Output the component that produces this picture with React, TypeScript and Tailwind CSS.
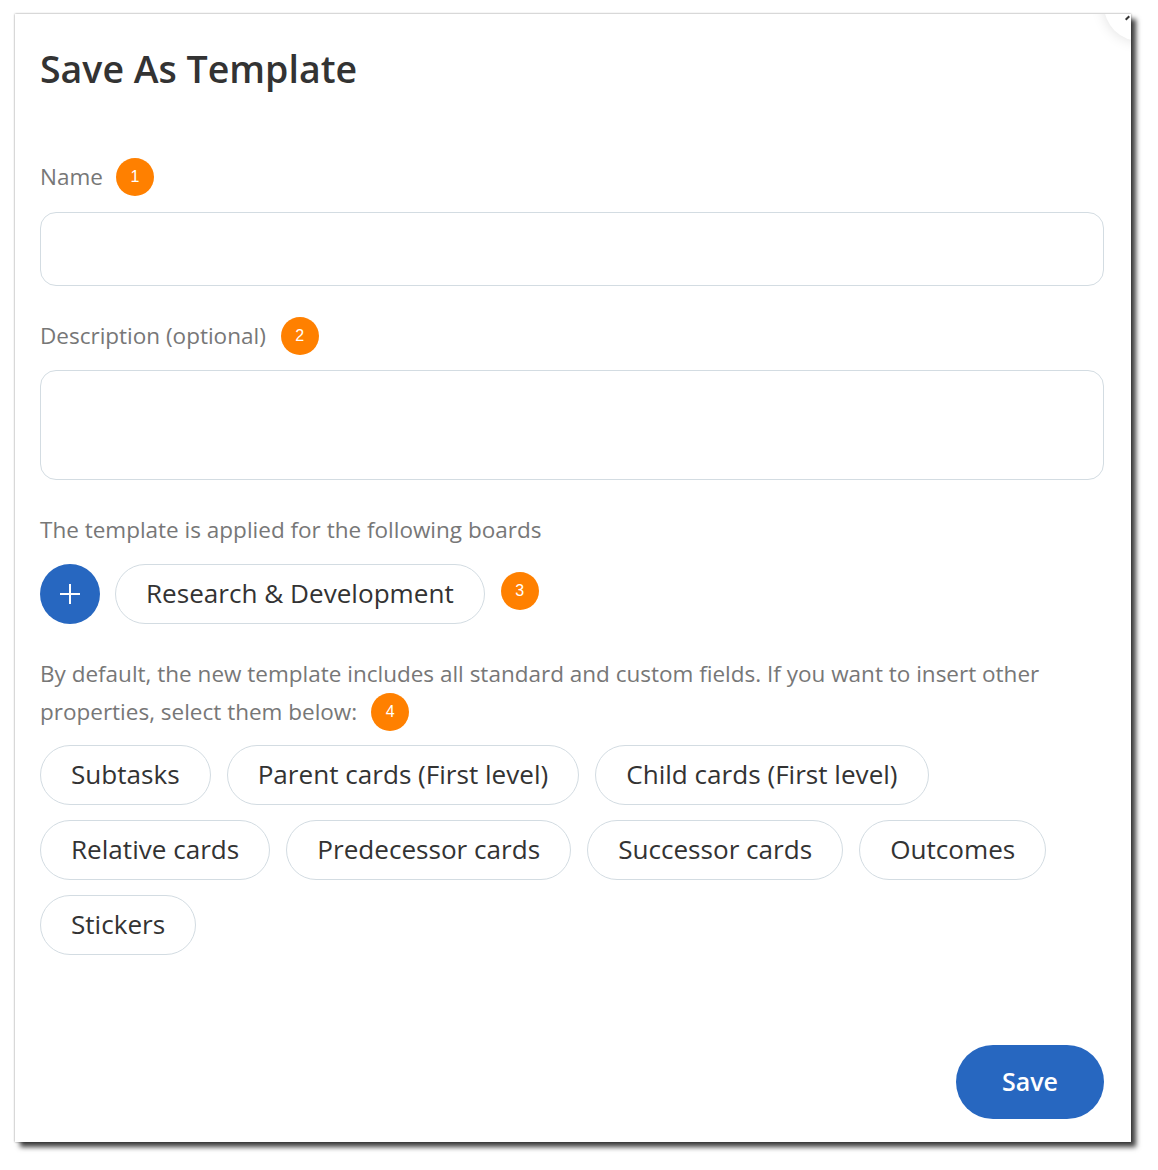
import React from 'react';

const Badge = ({ n }: { n: number }) => (
    <span className="inline-flex items-center justify-center w-[38px] h-[38px] rounded-full bg-[#ff8000] text-white text-[16px] leading-none shrink-0 [font-family:'Liberation_Sans',Arial,sans-serif]">
        {n}
    </span>
);

const Chip = ({ label }: { label: string }) => (
    <div className="h-[60px] px-[30px] flex items-center rounded-full border border-[#d3dce2] bg-white text-[26.1px] text-[#333]">
        {label}
    </div>
);

const properties = [
    'Subtasks',
    'Parent cards (First level)',
    'Child cards (First level)',
    'Relative cards',
    'Predecessor cards',
    'Successor cards',
    'Outcomes',
    'Stickers',
];

const App = () => {
    return (
        <div className="w-[1158px] h-[1170px] bg-white pl-[15px] pt-[14px] [font-family:'Open_Sans',sans-serif]">
            <div className="relative w-[1116px] h-[1128px] bg-white overflow-hidden shadow-[5px_5px_5px_rgba(0,0,0,0.75),0_0_2px_rgba(0,0,0,0.45)] pl-[25px] pr-[27px] pt-[31px]">
                {/* close button, cut off at the corner */}
                <div className="absolute right-[-45px] top-[-45px] w-[72px] h-[72px] rounded-full bg-white shadow-[0_0_14px_rgba(0,0,0,0.13)]" />
                <div className="absolute right-[1px] top-[3px] w-[5px] h-[2px] bg-[#333] -rotate-45" />

                <h1 className="text-[37.5px] leading-[48px] font-semibold text-[#333]">Save As Template</h1>

                <div className="mt-[65px] flex items-center gap-[13px]">
                    <span className="text-[22.5px] leading-[30px] text-[#777]">Name</span>
                    <Badge n={1} />
                </div>
                <div className="mt-[16px] h-[74px] rounded-[16px] border border-[#d3dce2]" />

                <div className="mt-[31px] flex items-center gap-[15px]">
                    <span className="text-[22.5px] leading-[30px] text-[#777]">Description (optional)</span>
                    <Badge n={2} />
                </div>
                <div className="mt-[15px] h-[110px] rounded-[16px] border border-[#d3dce2]" />

                <p className="mt-[35px] text-[22.5px] leading-[30px] text-[#777]">The template is applied for the following boards</p>
                <div className="mt-[19px] flex items-center gap-[15px]">
                    <button className="w-[60px] h-[60px] rounded-full bg-[#2767c0] flex items-center justify-center">
                        <svg width="22" height="22" viewBox="0 0 22 22">
                            <path d="M11 1v20M1 11h20" stroke="#fff" strokeWidth="2" />
                        </svg>
                    </button>
                    <Chip label="Research & Development" />
                    <span className="ml-px -mt-[6px]">
                        <Badge n={3} />
                    </span>
                </div>

                <div className="mt-[31px] text-[22.5px] leading-[38px] text-[#777]">
                    <p>By default, the new template includes all standard and custom fields. If you want to insert other</p>
                    <div className="flex items-center gap-[14px]">
                        <span>properties, select them below:</span>
                        <Badge n={4} />
                    </div>
                </div>

                <div className="mt-[14px] flex flex-wrap gap-x-[16px] gap-y-[15px]">
                    {properties.map(p => (
                        <Chip key={p} label={p} />
                    ))}
                </div>

                <div className="absolute right-[27px] bottom-[23px]">
                    <button className="w-[148px] h-[74px] rounded-full bg-[#2767c0] text-white text-[25px] font-semibold">
                        Save
                    </button>
                </div>
            </div>
        </div>
    );
};

export default App;
